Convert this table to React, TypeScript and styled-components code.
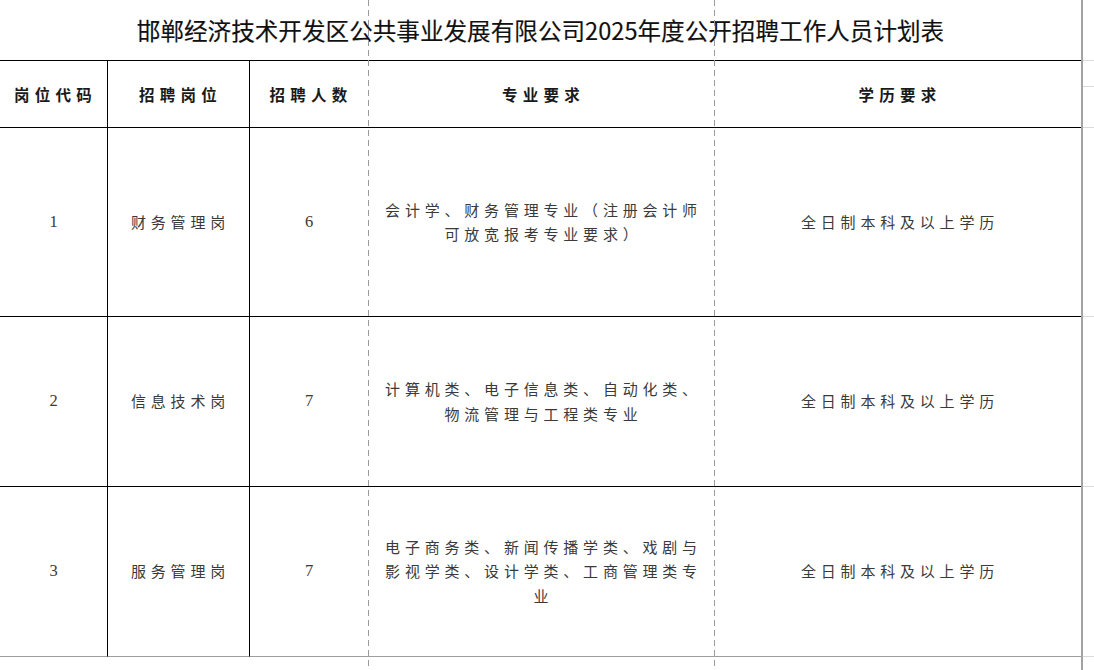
import React from "react";
import styled, { createGlobalStyle } from "styled-components";

const GlobalStyle = createGlobalStyle`
  *, *::before, *::after { box-sizing: border-box; }
  html, body { margin: 0; padding: 0; background: #ffffff; }
  body {
    font-family: "Noto Sans CJK SC", "Noto Sans", sans-serif;
    color: #222;
  }
`;

const Page = styled.div`
  position: relative;
  display: flex;
  width: 1094px;
  height: 670px;
  overflow: hidden;
  background: #fff;
`;

const Sheet = styled.div`
  box-sizing: content-box;
  width: 1081px;
  height: 670px;
  border-right: 2px solid #a3a3a3;
  display: flex;
  flex-direction: column;
  flex: none;
`;

const Title = styled.h1`
  margin: 0;
  height: 60px;
  display: flex;
  align-items: center;
  justify-content: center;
  padding-bottom: 1px;
  font-family: "Noto Sans CJK SC", sans-serif;
  font-size: 23.6px;
  font-weight: 400;
  -webkit-text-stroke: 0.15px #111;
  color: #111;
  letter-spacing: 0;
`;

const Table = styled.div`
  display: grid;
  grid-template-columns: 107px 142px 119px 347px 366px;
  grid-template-rows: 67px 189px 170px 171px;
`;

const Cell = styled.div<{ $divider?: boolean; $last?: boolean; $head?: boolean; $num?: boolean; $pad?: number }>`
  display: flex;
  align-items: center;
  justify-content: center;
  text-align: center;
  border-top: 1px solid #000;
  border-left: ${(p) => (p.$divider ? "1px solid #000" : "none")};
  border-bottom: ${(p) => (p.$last ? "1px solid #9e9e9e" : "none")};
  padding: ${(p) =>
    p.$num ? "0 4px" : `0 ${p.$pad ?? 4}px 0 ${(p.$pad ?? 4) + 4}px`};
  font-family: ${(p) =>
    p.$num ? `"Liberation Serif", "Noto Sans CJK SC", serif` : `"Noto Sans CJK SC", sans-serif`};
  font-size: ${(p) => (p.$head ? "15.5px" : p.$num ? "16.5px" : "15px")};
  font-weight: ${(p) => (p.$head ? 700 : 400)};
  color: ${(p) => (p.$head ? "#1a1a1a" : "#3a3a3a")};
  letter-spacing: ${(p) => (p.$num ? "0" : p.$head ? "5.2px" : "4.8px")};
  line-height: 24.5px;
`;

const DashedLine = styled.div`
  position: absolute;
  top: 0;
  bottom: 0;
  width: 1px;
  background: repeating-linear-gradient(to bottom, #9a9a9a 0 6px, transparent 6px 10px);
  pointer-events: none;
`;

const Margin = styled.div`
  flex: 1;
  display: grid;
  grid-template-rows: 60px 26px 41px 189px 170px 170px 1fr;
`;

const MarginRow = styled.div<{ $first?: boolean }>`
  border-top: ${(p) => (p.$first ? "none" : "1px solid #dadada")};
`;

type Row = { code: string; post: string; count: string; major: string; edu: string };

const rows: Row[] = [
  {
    code: "1",
    post: "财务管理岗",
    count: "6",
    major: "会计学、财务管理专业（注册会计师可放宽报考专业要求）",
    edu: "全日制本科及以上学历",
  },
  {
    code: "2",
    post: "信息技术岗",
    count: "7",
    major: "计算机类、电子信息类、自动化类、物流管理与工程类专业",
    edu: "全日制本科及以上学历",
  },
  {
    code: "3",
    post: "服务管理岗",
    count: "7",
    major: "电子商务类、新闻传播学类、戏剧与影视学类、设计学类、工商管理类专业",
    edu: "全日制本科及以上学历",
  },
];

const headers = ["岗位代码", "招聘岗位", "招聘人数", "专业要求", "学历要求"];

export default function App() {
  return (
    <>
      <GlobalStyle />
      <Page>
        <Sheet>
          <Title>邯郸经济技术开发区公共事业发展有限公司2025年度公开招聘工作人员计划表</Title>
          <Table>
            {headers.map((h, i) => (
              <Cell key={h} $head $divider={i === 1 || i === 2}>
                {h}
              </Cell>
            ))}
            {rows.map((r, idx) => {
              const last = idx === rows.length - 1;
              return (
                <React.Fragment key={r.code}>
                  <Cell $num $last={last}>{r.code}</Cell>
                  <Cell $divider $last={last}>{r.post}</Cell>
                  <Cell $divider $num $last={last}>{r.count}</Cell>
                  <Cell $last={last} $pad={10}>{r.major}</Cell>
                  <Cell $last={last}>{r.edu}</Cell>
                </React.Fragment>
              );
            })}
          </Table>
        </Sheet>
        <Margin>
          <MarginRow $first />
          <MarginRow />
          <MarginRow />
          <MarginRow />
          <MarginRow />
          <MarginRow />
          <MarginRow />
        </Margin>
        <DashedLine style={{ left: 368 }} />
        <DashedLine style={{ left: 714 }} />
      </Page>
    </>
  );
}
